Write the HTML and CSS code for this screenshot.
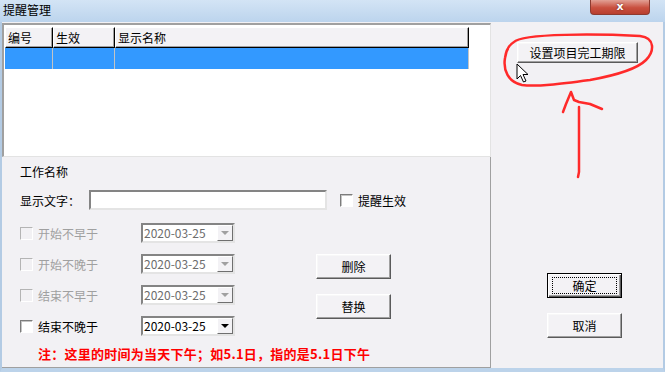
FILE: index.html
```html
<!DOCTYPE html>
<html lang="zh-CN">
<head>
  <meta charset="UTF-8">
  <title>提醒管理</title>
  <link rel="stylesheet" href="styles.css">
</head>
<body>

  <div class="window">
    <div class="titlebar">
      <span class="title">提醒管理</span>
      <div class="close">x</div>
    </div>

    <div class="client">
      <div class="left">
        <div class="list">
          <div class="list-head">
            <div class="col c1">编号</div>
            <div class="col c2">生效</div>
            <div class="col c3">显示名称</div>
          </div>
          <div class="list-row selected">
            <div class="cell c1"></div>
            <div class="cell c2"></div>
            <div class="cell c3"></div>
          </div>
        </div>

        <div class="panel">
          <div class="caption">工作名称</div>

          <div class="text-row">
            <span class="field-label">显示文字：</span>
            <div class="textbox"></div>
            <span class="check"></span>
            <span class="check-label">提醒生效</span>
          </div>

          <div class="dates">
            <div class="date-list">
              <div class="date-row disabled">
                <div class="date-name"><span class="check"></span><span>开始不早于</span></div>
                <div class="combo"><span class="combo-text">2020-03-25</span><span class="drop"><i></i></span></div>
              </div>
              <div class="date-row disabled">
                <div class="date-name"><span class="check"></span><span>开始不晚于</span></div>
                <div class="combo"><span class="combo-text">2020-03-25</span><span class="drop"><i></i></span></div>
              </div>
              <div class="date-row disabled">
                <div class="date-name"><span class="check"></span><span>结束不早于</span></div>
                <div class="combo"><span class="combo-text">2020-03-25</span><span class="drop"><i></i></span></div>
              </div>
              <div class="date-row">
                <div class="date-name"><span class="check"></span><span>结束不晚于</span></div>
                <div class="combo"><span class="combo-text">2020-03-25</span><span class="drop"><i></i></span></div>
              </div>
            </div>

            <div class="date-buttons">
              <button class="btn">删除</button>
              <button class="btn">替换</button>
            </div>
          </div>

          <div class="note">注：这里的时间为当天下午；如5.1日，指的是5.1日下午</div>
        </div>
      </div>

      <div class="right">
        <button class="btn wide">设置项目完工期限</button>
        <button class="btn ok default">确定</button>
        <button class="btn cancel">取消</button>
      </div>
    </div>
  </div>

  <!-- hand-drawn red marks and mouse pointer on top of the dialog -->
  <svg class="marks" width="665" height="372" viewBox="0 0 665 372">
    <path d="M514 42 C522 33 600 34 640 36 C656 38 654 52 646 60 C636 70 612 76 590 80 C560 84 536 87 522 85 C508 82 503 70 505 58 C506 50 509 45 514 42"
          fill="none" stroke="#ff2a2a" stroke-width="2.5" stroke-linecap="round" stroke-linejoin="round"/>
    <path d="M579 107 L579 172 L578 177" fill="none" stroke="#ff2a2a" stroke-width="2.5" stroke-linecap="round"/>
    <path d="M563 112 L566 104 L571 92 L574 100 L579 102 L590 104 L602 109"
          fill="none" stroke="#ff2a2a" stroke-width="2.5" stroke-linecap="round" stroke-linejoin="round"/>
    <path d="M517 64 L517 79 L520.5 75.5 L523.5 82 L526 81 L523 74.5 L528 74.5 Z"
          fill="#fff" stroke="#000" stroke-width="1" stroke-linejoin="round"/>
  </svg>

</body>
</html>
```

FILE: styles.css
```css
* {
  box-sizing: border-box;
}

body {
  margin: 0;
  width: 665px;
  height: 372px;
  overflow: hidden;
  position: relative;
  font-family: "Noto Sans CJK SC", "Noto Sans", sans-serif;
  font-size: 12px;
  color: #000;
  background: #f2f1f4;
}

.window {
  display: flex;
  flex-direction: column;
  height: 372px;
}

/* title bar */
.titlebar {
  height: 22px;
  display: flex;
  align-items: flex-start;
  padding-left: 3px;
  background: linear-gradient(to bottom, #d3e4f5, #bcd4ed);
}

.title {
  margin-top: 3px;
  line-height: 14px;
  font-size: 12px;
}

.close {
  margin-left: auto;
  margin-right: 15px;
  width: 60px;
  height: 15px;
  border: 1px solid #8d3b30;
  border-top: none;
  border-radius: 0 0 4px 4px;
  background: linear-gradient(to bottom, #e2a195, #c9503f 55%, #b8402f);
  color: #fff;
  font-family: "DejaVu Sans", sans-serif;
  font-weight: bold;
  font-size: 11px;
  line-height: 13px;
  text-align: center;
  text-shadow: 0 0 2px #5a1a10;
}

/* client area */
.client {
  flex: 1;
  display: flex;
  border-left: 2px solid #b3cbe4;
  border-right: 2px solid #b3cbe4;
  border-bottom: 4px solid #bcd3ea;
}

.left {
  width: 489px;
  display: flex;
  flex-direction: column;
}

/* list view */
.list {
  margin-top: 1px;
  height: 134px;
  background: #fff;
  border-top: 2px solid #a0a0a0;
  border-left: 2px solid #a0a0a0;
  border-right: 1px solid #e3e3e3;
  border-bottom: 1px solid #e3e3e3;
  padding: 2px 0 0 1px;
}

.list-head,
.list-row {
  display: flex;
  width: 464px;
  height: 21px;
}

.col {
  height: 21px;
  padding-left: 2px;
  line-height: 19px;
  background: #f3f2f5;
  border-top: 1px solid #fff;
  border-left: 1px solid #fff;
  border-right: 1px solid #000;
  border-bottom: 1px solid #000;
  box-shadow: inset -1px -1px #a0a0a0;
}

.c1 { width: 48px; }
.c2 { width: 62px; }
.c3 { width: 354px; }

.list-row.selected {
  background: #3399ff;
}

.cell {
  height: 21px;
  border-right: 1px solid #c4c4c4;
}

/* lower panel */
.panel {
  flex: 1;
  background: #f2f1f4;
  border-right: 1px solid #a0a0a0;
  border-bottom: 1px solid #a0a0a0;
  padding: 7px 0 0 18px;
}

.caption {
  line-height: 16px;
}

.text-row {
  display: flex;
  align-items: center;
  height: 20px;
  margin-top: 10px;
}

.field-label {
  width: 69px;
}

.textbox {
  width: 238px;
  height: 20px;
  background: #fff;
  border: 2px solid;
  border-color: #848484 #e4e4e4 #e4e4e4 #848484;
}

.text-row .check {
  margin-left: 13px;
}

.check-label {
  margin-left: 5px;
}

.check {
  display: inline-block;
  width: 13px;
  height: 13px;
  background: #fff;
  border: 1px solid;
  border-color: #7c7c7c #fff #fff #7c7c7c;
  box-shadow: inset 1px 1px #c4c4c4;
  flex: none;
}

.dates {
  display: flex;
  margin-top: 13px;
}

.date-list {
  display: flex;
  flex-direction: column;
  gap: 11px;
}

.date-row {
  display: flex;
  align-items: center;
  height: 20px;
}

.date-name {
  width: 121px;
  display: flex;
  align-items: center;
  gap: 5px;
}

.combo {
  width: 94px;
  height: 20px;
  display: flex;
  align-items: center;
  justify-content: space-between;
  background: #fff;
  border: 2px solid;
  border-color: #848484 #e4e4e4 #e4e4e4 #848484;
}

.combo-text {
  line-height: 16px;
  padding-left: 1px;
}

.drop {
  width: 16px;
  height: 16px;
  display: flex;
  align-items: center;
  justify-content: center;
  background: #f3f2f5;
  border: 1px solid;
  border-color: #fff #6f6f6f #6f6f6f #fff;
}

.drop i {
  width: 0;
  height: 0;
  border-left: 4px solid transparent;
  border-right: 4px solid transparent;
  border-top: 4px solid #000;
}

.disabled .date-name {
  color: #a0a0a0;
}

.disabled .check {
  background: #f2f1f4;
  border-color: #b4b4b4 #fff #fff #b4b4b4;
  box-shadow: none;
}

.disabled .combo-text {
  color: #6d6d6d;
}

.disabled .drop i {
  border-top-color: #a0a0a0;
}

.date-buttons {
  display: flex;
  flex-direction: column;
  gap: 15px;
  margin-left: 81px;
  padding-top: 31px;
}

.note {
  margin: 10px 0 0 18px;
  line-height: 16px;
  font-size: 13px;
  font-weight: bold;
  letter-spacing: 0.25px;
  color: #ff0000;
}

/* right column */
.right {
  flex: 1;
  display: flex;
  flex-direction: column;
  align-items: flex-start;
  background: #f2f1f4;
}

.btn {
  position: relative;
  width: 75px;
  height: 25px;
  padding: 0;
  font-family: inherit;
  font-size: 12px;
  color: #000;
  background: #f3f2f5;
  border: 1px solid;
  border-color: #fff #5a5a5a #5a5a5a #fff;
  box-shadow: inset -1px -1px #a0a0a0, inset 1px 1px #f8f8f8;
}

.btn.wide {
  width: 121px;
  height: 21px;
  margin: 20px 0 0 26px;
}

.btn.ok {
  margin: 210px 0 0 56px;
}

.btn.cancel {
  margin: 15px 0 0 56px;
}

.btn.default {
  border: 1px solid #000;
  box-shadow: inset 1px 1px #fff, inset -1px -1px #5a5a5a, inset -2px -2px #a0a0a0;
}

.btn.default::after {
  content: "";
  position: absolute;
  left: 4px;
  top: 3px;
  right: 4px;
  bottom: 3px;
  border: 1px dotted #000;
}

/* red annotation layer */
.marks {
  position: absolute;
  left: 0;
  top: 0;
  pointer-events: none;
}
```
